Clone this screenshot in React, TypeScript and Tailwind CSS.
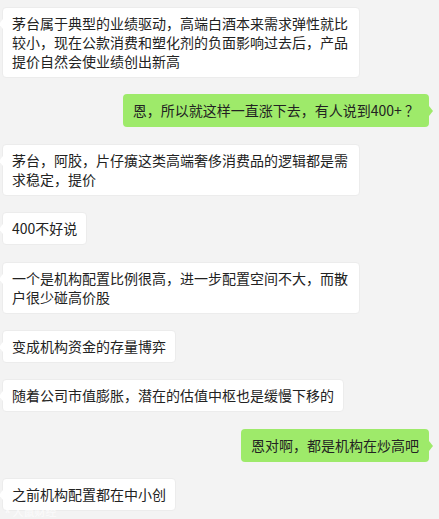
type Msg = { side: "left" | "right"; text: string };

const messages: Msg[] = [
  { side: "left", text: "茅台属于典型的业绩驱动，高端白酒本来需求弹性就比较小，现在公款消费和塑化剂的负面影响过去后，产品提价自然会使业绩创出新高" },
  { side: "right", text: "恩，所以就这样一直涨下去，有人说到400+ ？" },
  { side: "left", text: "茅台，阿胶，片仔癀这类高端奢侈消费品的逻辑都是需求稳定，提价" },
  { side: "left", text: "400不好说" },
  { side: "left", text: "一个是机构配置比例很高，进一步配置空间不大，而散户很少碰高价股" },
  { side: "left", text: "变成机构资金的存量博弈" },
  { side: "left", text: "随着公司市值膨胀，潜在的估值中枢也是缓慢下移的" },
  { side: "right", text: "恩对啊，都是机构在炒高吧" },
  { side: "left", text: "之前机构配置都在中小创" },
];

const Bubble = ({ side, text }: Msg) => {
  const mine = side === "right";
  return (
    <div className={mine ? "flex justify-end pr-[10px]" : "flex justify-start pl-[2px]"}>
      <div
        className={
          "relative max-w-[358px] rounded-[4px] text-[14px] leading-[19px] text-[#222] " +
          (mine ? "bg-[#9eea6a] px-[10px] py-[7px]" : "bg-white border border-[#ececec] px-[9px] py-[6px]")
        }
      >
        {mine ? (
          <span className="absolute right-[-4px] top-[12px] h-0 w-0 border-y-[5px] border-l-[4px] border-y-transparent border-l-[#9eea6a]" />
        ) : (
          <span className="absolute left-[-4px] top-[11px] h-0 w-0 border-y-[5px] border-r-[4px] border-y-transparent border-r-white" />
        )}
        {text}
      </div>
    </div>
  );
};

export default function App() {
  return (
    <div
      className="relative h-[519px] w-[439px] overflow-hidden bg-[#f3f3f3]"
      style={{ fontFamily: '"Microsoft YaHei", "Noto Sans CJK SC", "Noto Sans", sans-serif' }}
    >
      <div className="flex flex-col gap-[16.4px] pt-[7px]">
        {messages.map((m, i) => (
          <Bubble key={i} {...m} />
        ))}
      </div>
      {/* faint watermark */}
      <div className="absolute bottom-[2px] left-[5px] flex items-center gap-[3px] text-[11px] leading-none text-white/70">
        <span className="font-bold italic">ᴷ</span>
        <span>大鼠财经</span>
      </div>
    </div>
  );
}
